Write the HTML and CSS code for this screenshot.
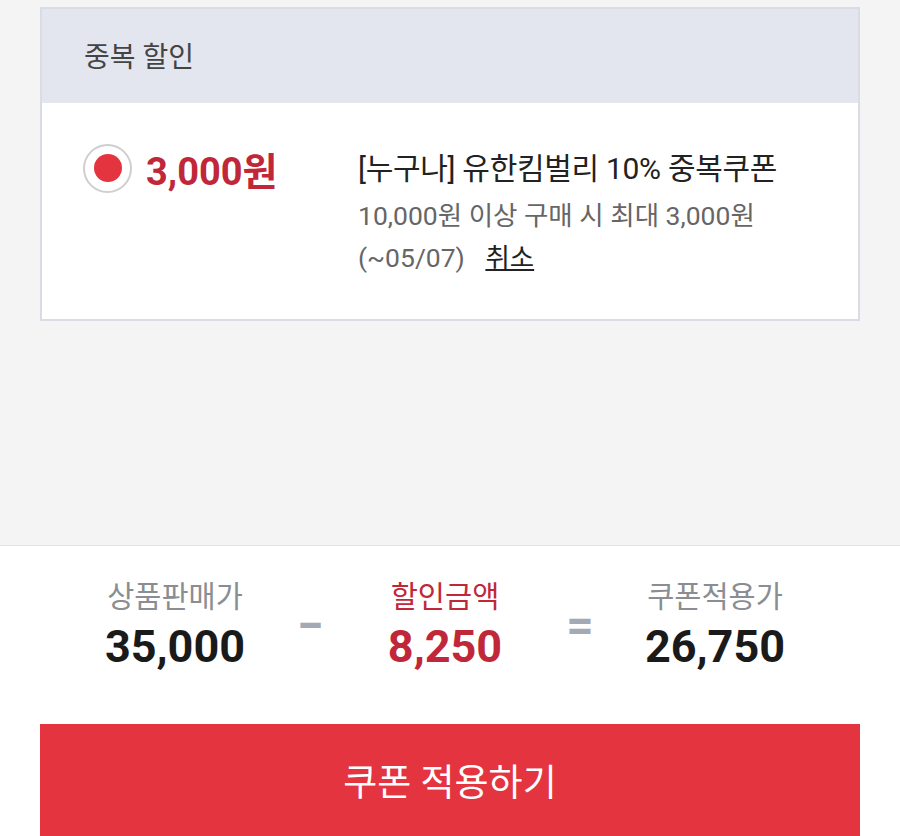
FILE: index.html
```html
<!DOCTYPE html>
<html lang="ko">
<head>
    <meta charset="UTF-8">
    <meta name="viewport" content="width=device-width, initial-scale=1">
    <title>쿠폰 적용</title>
    <link rel="stylesheet" href="styles.css">
</head>
<body>

<div class="coupon-area">
    <!-- 중복 할인 카드 -->
    <div class="coupon-card">
        <div class="card-head">중복 할인</div>
        <div class="card-body">
            <div class="pick">
                <span class="radio on"></span>
                <span class="amount">3,000원</span>
            </div>
            <div class="info">
                <p class="title">[누구나] 유한킴벌리 10% 중복쿠폰</p>
                <p class="desc">10,000원 이상 구매 시 최대 3,000원</p>
                <p class="desc">(~05/07) <a href="#" class="cancel">취소</a></p>
            </div>
        </div>
    </div>
</div>

<!-- 합계 -->
<div class="summary">
    <div class="calc">
        <div class="item">
            <div class="label">상품판매가</div>
            <div class="num">35,000</div>
        </div>
        <div class="op">−</div>
        <div class="item">
            <div class="label red">할인금액</div>
            <div class="num red">8,250</div>
        </div>
        <div class="op">=</div>
        <div class="item">
            <div class="label">쿠폰적용가</div>
            <div class="num">26,750</div>
        </div>
    </div>
    <button class="apply-btn">쿠폰 적용하기</button>
</div>

</body>
</html>
```

FILE: styles.css
```css
body {
    margin: 0;
    background: #f4f4f4;
    font-family: 'Roboto', 'Noto Sans CJK KR', sans-serif;
    color: #222;
    overflow: hidden;
}

.coupon-area {
    height: 545px;
    padding: 7px 40px 0;
    box-sizing: border-box;
}

.coupon-card {
    border: 2px solid #d9dce4;
    background: #fff;
}

.card-head {
    height: 94px;
    background: #e3e6ee;
    padding: 2px 0 0 42px;
    box-sizing: border-box;
    font-size: 28px;
    line-height: 94px;
    color: #444;
}

.card-body {
    display: flex;
    height: 216px;
    padding: 40px 0 0 41px;
    box-sizing: border-box;
}

.pick {
    display: flex;
    align-items: center;
    width: 275px;
    height: 50px;
}

.radio {
    width: 49px;
    height: 49px;
    border: 2px solid #cfcfcf;
    border-radius: 50%;
    box-sizing: border-box;
    display: flex;
    align-items: center;
    justify-content: center;
    margin-right: 14px;
}

.radio.on::after {
    content: "";
    width: 28px;
    height: 28px;
    border-radius: 50%;
    background: #e3343f;
}

.amount {
    font-size: 38px;
    font-weight: bold;
    color: #c0283a;
}

.info p {
    margin: 0;
}

.title {
    font-size: 30px;
    line-height: 52px;
    color: #222;
    letter-spacing: -0.3px;
}

.desc {
    font-size: 26.5px;
    line-height: 42px;
    color: #666;
}

.cancel {
    color: #222;
    margin-left: 14px;
}

.summary {
    background: #fff;
    border-top: 1px solid #e4e4e4;
}

.calc {
    display: flex;
    justify-content: center;
    padding: 32px 10px 0 0;
    height: 178px;
    box-sizing: border-box;
}

.item {
    width: 200px;
    text-align: center;
}

.label {
    font-size: 29.5px;
    line-height: 38px;
    color: #8a8d92;
}

.num {
    font-size: 45px;
    font-weight: bold;
    line-height: 62px;
    color: #1a1a1a;
}

.red {
    color: #c0283a;
}

.op {
    width: 70px;
    text-align: center;
    font-size: 48px;
    font-weight: bold;
    color: #a4aab5;
    padding-top: 19px;
}

.apply-btn {
    display: block;
    width: 820px;
    height: 120px;
    margin: 0 40px;
    border: none;
    background: #e3343f;
    color: #fff;
    font-family: 'Roboto', 'Noto Sans CJK KR', sans-serif;
    font-size: 37px;
    padding-bottom: 10px;
}
```
